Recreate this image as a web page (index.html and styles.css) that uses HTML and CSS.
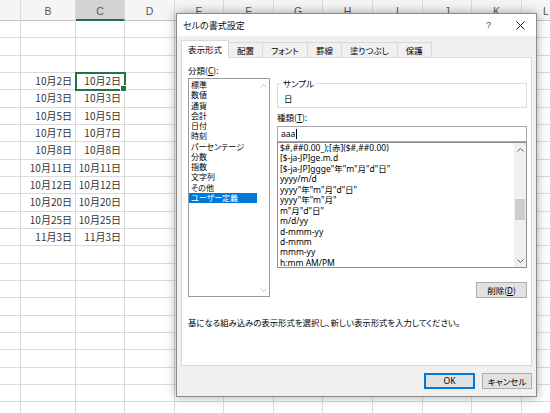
FILE: index.html
```html
<!DOCTYPE html>
<html lang="ja">
<head>
<meta charset="utf-8">
<title>セルの書式設定</title>
<link rel="stylesheet" href="styles.css">
</head>
<body>
<div class="sheet" id="sheet"></div>

<div class="dialog">
  <div class="titlebar">
    <span class="title">セルの書式設定</span>
    <span class="help">?</span>
    <svg class="close" width="9" height="9" viewBox="0 0 9 9"><path d="M0.5 0.5L8.5 8.5M8.5 0.5L0.5 8.5" stroke="#222" stroke-width="1" fill="none"/></svg>
  </div>
  <div class="dbody">
    <div class="tabs">
      <div class="tab active">表示形式</div>
      <div class="tab">配置</div>
      <div class="tab">フォント</div>
      <div class="tab">罫線</div>
      <div class="tab">塗りつぶし</div>
      <div class="tab">保護</div>
    </div>
    <div class="panel">
      <div class="cols">
        <div class="left">
          <div class="label">分類(<u>C</u>):</div>
          <div class="listbox cat">
            <ul class="items">
              <li>標準</li>
              <li>数値</li>
              <li>通貨</li>
              <li>会計</li>
              <li>日付</li>
              <li>時刻</li>
              <li>パーセンテージ</li>
              <li>分数</li>
              <li>指数</li>
              <li>文字列</li>
              <li>その他</li>
              <li class="selected">ユーザー定義</li>
            </ul>
            <div class="vscroll disabled">
              <svg width="7" height="4" viewBox="0 0 7 4"><path d="M0.5 3.5L3.5 0.5L6.5 3.5" stroke="currentColor" fill="none"/></svg>
              <svg width="7" height="4" viewBox="0 0 7 4"><path d="M0.5 0.5L3.5 3.5L6.5 0.5" stroke="currentColor" fill="none"/></svg>
            </div>
          </div>
        </div>
        <div class="right">
          <fieldset class="sample">
            <legend>サンプル</legend>
            <div class="sample-val">日</div>
          </fieldset>
          <div class="label label-type">種類(<u>T</u>):</div>
          <div class="input">aaa<span class="caret"></span></div>
          <div class="listbox fmt">
            <ul class="items">
              <li>$#,##0.00_);[赤]($#,##0.00)</li>
              <li>[$-ja-JP]ge.m.d</li>
              <li>[$-ja-JP]ggge"年"m"月"d"日"</li>
              <li>yyyy/m/d</li>
              <li>yyyy"年"m"月"d"日"</li>
              <li>yyyy"年"m"月"</li>
              <li>m"月"d"日"</li>
              <li>m/d/yy</li>
              <li>d-mmm-yy</li>
              <li>d-mmm</li>
              <li>mmm-yy</li>
              <li>h:mm AM/PM</li>
            </ul>
            <div class="vscroll">
              <svg width="7" height="4" viewBox="0 0 7 4"><path d="M0.5 3.5L3.5 0.5L6.5 3.5" stroke="currentColor" fill="none"/></svg>
              <div class="track"><div class="thumb"></div></div>
              <svg width="7" height="4" viewBox="0 0 7 4"><path d="M0.5 0.5L3.5 3.5L6.5 0.5" stroke="currentColor" fill="none"/></svg>
            </div>
          </div>
          <div class="del-row"><button class="btn del">削除(<u>D</u>)</button></div>
        </div>
      </div>
      <p class="desc">基になる組み込みの表示形式を選択し、新しい表示形式を入力してください。</p>
    </div>
    <div class="footer">
      <button class="btn ok">OK</button>
      <button class="btn cancel">キャンセル</button>
    </div>
  </div>
</div>
<script src="script.js"></script>
</body>
</html>
```

FILE: styles.css
```css
* { box-sizing: border-box; margin: 0; padding: 0; }
html, body { width: 550px; height: 413px; overflow: hidden; background: #fff; }
body { position: relative; font-family: "Noto Sans CJK JP", "Noto Sans", sans-serif; }

/* ---------- spreadsheet ---------- */
.sheet {
  display: grid;
  grid-template-columns: 21px 55px 49px 50px 49px 50px 49px 50px 50px 49px 50px 49px;
  grid-template-rows: 21px;
  grid-auto-rows: 17.33px;
  font-size: 10px;
  color: #333;
}
.cell {
  border-right: 1px solid #dadada;
  border-bottom: 1px solid #dadada;
  text-align: right;
  padding-right: 3px;
  line-height: 16px;
  white-space: nowrap;
  overflow: hidden;
}
.cell.hd {
  background: #f5f5f5;
  border-bottom: 1px solid #c6c6c6;
  border-right-color: #dcdcdc;
  text-align: center;
  padding: 0;
  line-height: 22px;
  font-family: "Liberation Sans", sans-serif;
  font-size: 10.5px;
  color: #555;
}
.cell.hd-sel {
  background: #d3d3d3;
  border-bottom: 2px solid #217346;
}
.cell.sel {
  position: relative;
  overflow: visible;
  outline: 2px solid #217346;
  outline-offset: -1px;
  z-index: 1;
}
.cell.sel::after {
  content: "";
  position: absolute;
  right: -3px;
  bottom: -3px;
  width: 5px;
  height: 5px;
  background: #217346;
  border: 1px solid #fff;
}

/* ---------- dialog ---------- */
.dialog {
  position: absolute;
  left: 176px;
  top: 13px;
  width: 361px;
  height: 384px;
  border: 1px solid #8a8a8a;
  box-shadow: 0 0 10px rgba(0, 0, 0, 0.35);
  background: #f0f0f0;
  display: flex;
  flex-direction: column;
  font-size: 8.5px;
  color: #000;
  font-feature-settings: "palt";
}
.titlebar {
  height: 22px;
  background: #fff;
  display: flex;
  align-items: center;
  padding-left: 6px;
}
.title { flex: 1; font-size: 9px; color: #111; }
.help { font-family: "Liberation Sans", sans-serif; font-size: 9px; color: #444; margin-right: 25px; }
.close { margin-right: 11px; }

.dbody {
  flex: 1;
  display: flex;
  flex-direction: column;
  padding: 4px 4px 0;
}
.tabs {
  display: flex;
  align-items: flex-end;
  height: 17px;
}
.tab {
  height: 15px;
  line-height: 14px;
  padding: 0 8px;
  border: 1px solid #d9d9d9;
  border-bottom: none;
  margin-right: -1px;
  background: #f0f0f0;
  text-align: center;
  white-space: nowrap;
}
.tab.active {
  position: relative;
  z-index: 1;
  height: 18px;
  line-height: 17px;
  margin-bottom: -1px;
  padding: 0 6px;
  background: #fff;
}
.panel {
  height: 309px;
  background: #fff;
  border: 1px solid #d9d9d9;
  padding: 6px 4px 0 6px;
}
.cols { display: flex; gap: 7px; }
.left { width: 82px; }
.right { width: 250px; }
.label { height: 12px; line-height: 12px; margin-bottom: 2px; }

.listbox {
  display: flex;
  border: 1px solid #9c9c9c;
  background: #fff;
}
.items { list-style: none; flex: 1; }
.cat { height: 219px; }
.cat .items { padding-top: 1px; }
.cat li { font-size: 8px; line-height: 10.27px; height: 10.27px; padding-left: 2px; white-space: nowrap; }
.cat li.selected { background: #0078d7; color: #fff; }

.vscroll {
  width: 12px;
  display: flex;
  flex-direction: column;
  align-items: center;
  justify-content: space-between;
  padding: 5px 0 4px;
  color: #606060;
  background: #f0f0f0;
}
.vscroll.disabled { background: #fff; color: #c8c8c8; }
.track { flex: 1; width: 100%; padding: 0 1px; }
.thumb { margin-top: 47px; height: 21px; background: #cdcdcd; }

.sample {
  margin-top: 14px;
  height: 30px;
  border: 1px solid #dcdcdc;
  padding: 0 0 0 3px;
}
.sample legend { padding: 0 2px; line-height: 10px; font-size: 8.5px; }
.sample-val { padding-top: 4px; padding-left: 3px; line-height: 12px; }
.label-type { margin-top: 3px; margin-bottom: 3px; }
.input {
  height: 16px;
  border: 1px solid #a8a8a8;
  padding-left: 3px;
  line-height: 14px;
  font-family: "Noto Sans", sans-serif;
  font-size: 8.5px;
  display: flex;
  align-items: center;
}
.caret { width: 1px; height: 10px; background: #000; margin-left: 1px; }
.fmt { height: 126px; border-color: #8e8e8e; }
.fmt .items { padding-left: 2px; }
.fmt li {
  line-height: 10.45px;
  height: 10.45px;
  font-family: "Noto Sans", "Noto Sans CJK JP", sans-serif;
  font-size: 8.5px;
  white-space: nowrap;
}
.del-row { display: flex; justify-content: flex-end; margin-top: 14px; }

.btn {
  height: 16px;
  background: #e1e1e1;
  border: 1px solid #adadad;
  font-family: "Noto Sans CJK JP", sans-serif;
  font-feature-settings: "palt";
  font-size: 8.5px;
  color: #000;
  line-height: 14px;
}
.del { width: 51px; }
.desc { margin-top: 18px; line-height: 12px; font-size: 8.4px; }
.footer {
  display: flex;
  justify-content: flex-end;
  gap: 7px;
  padding-top: 7px;
}
.ok { width: 51px; border-color: #0078d7; box-shadow: inset 0 0 0 1px #0078d7; font-family: "Noto Sans", sans-serif; }
.cancel { width: 50px; }
```

FILE: script.js
```js
(function () {
  var letters = ['', 'B', 'C', 'D', 'E', 'F', 'G', 'H', 'I', 'J', 'K', 'L'];
  var dates = ['10月2日', '10月3日', '10月5日', '10月7日', '10月8日', '10月11日', '10月12日', '10月20日', '10月25日', '11月3日'];
  var sheet = document.getElementById('sheet');
  letters.forEach(function (l, i) {
    var d = document.createElement('div');
    d.className = 'cell hd' + (i === 2 ? ' hd-sel' : '');
    d.textContent = l;
    sheet.appendChild(d);
  });
  for (var r = 0; r < 23; r++) {
    for (var c = 0; c < letters.length; c++) {
      var d = document.createElement('div');
      d.className = 'cell';
      var k = r - 3;
      if ((c === 1 || c === 2) && k >= 0 && k < dates.length) d.textContent = dates[k];
      if (c === 2 && r === 3) d.className += ' sel';
      sheet.appendChild(d);
    }
  }
})();
```
